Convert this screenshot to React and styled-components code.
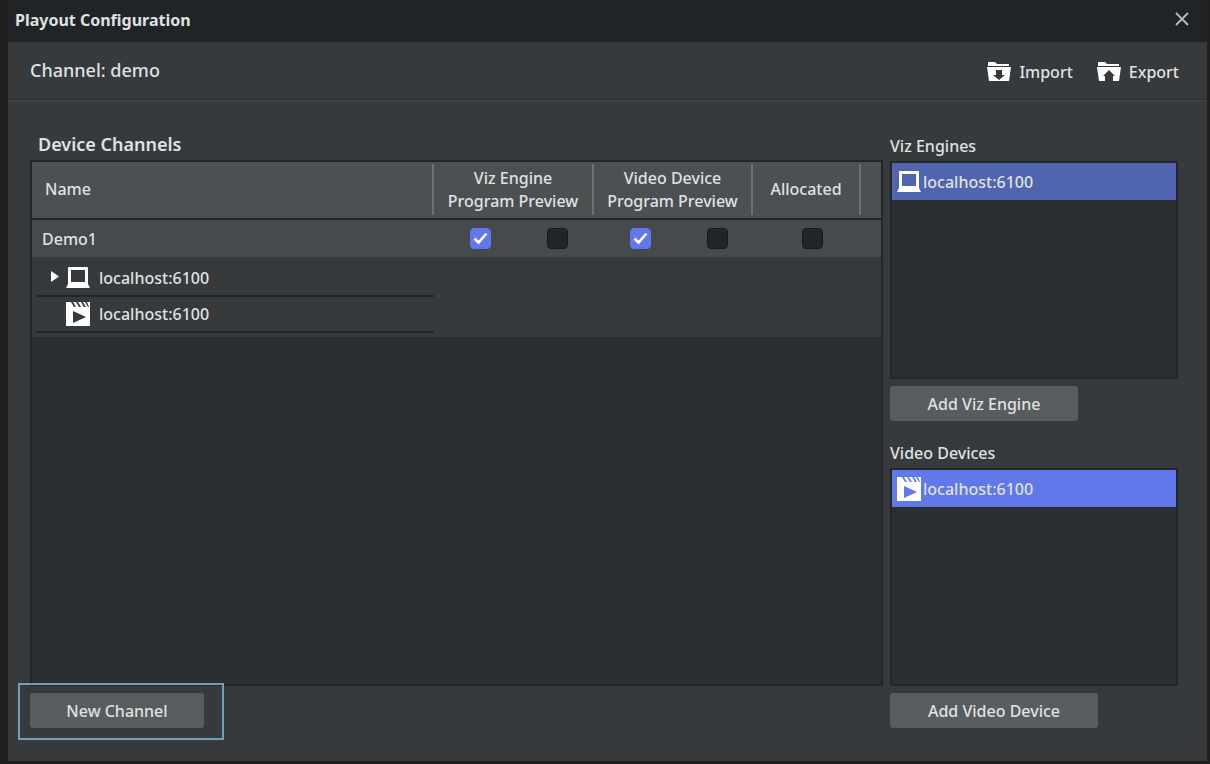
import React, { useState } from "react"
import styled, { createGlobalStyle } from "styled-components"

const colors = {
  page: "#1f1f20",
  titlebar: "#202427",
  window: "#373a3c",
  well: "#2b2f31",
  edge: "#232729",
  header: "#4c5052",
  row: "#464a4c",
  button: "#595c5e",
  text: "#dfe1e2",
  accent: "#6078ea",
  accentDim: "#5064b0",
  focus: "#6f9fbd"
}

const GlobalStyle = createGlobalStyle`
  * {
    box-sizing: border-box;
  }
  body {
    margin: 0;
    background: ${colors.page};
    color: ${colors.text};
    font: 500 16px/22px "Noto Sans", "Open Sans", sans-serif;
  }
  button {
    font: inherit;
    color: inherit;
    border: 0;
    cursor: pointer;
  }
`

const Page = styled.div`
  display: flex;
  min-height: 100vh;
  padding: 0 3px 3px 8px;
`

const Window = styled.main`
  flex: 1;
  display: flex;
  flex-direction: column;
  background: ${colors.window};
`

const TitleBar = styled.header`
  display: flex;
  align-items: center;
  justify-content: space-between;
  height: 42px;
  padding: 0 16px 2px 7px;
  background: ${colors.titlebar};
  h1 {
    margin: 0;
    font-size: 16px;
    font-weight: 700;
  }
`

const CloseButton = styled.button`
  display: flex;
  padding: 0;
  background: none;
`

const ChannelBar = styled.div`
  display: flex;
  align-items: center;
  justify-content: space-between;
  height: 60px;
  padding: 0 28px 0 22px;
  border-bottom: 2px solid #404345;
  box-shadow: inset 0 -1px #303335;
  h2 {
    margin: 0;
    padding-bottom: 2px;
    font-size: 18px;
    font-weight: 500;
  }
`

const Actions = styled.div`
  display: flex;
  gap: 24px;
  padding-top: 2px;
`

const ActionButton = styled.button`
  display: flex;
  align-items: center;
  gap: 8px;
  padding: 0;
  background: none;
`

const Body = styled.div`
  flex: 1;
  display: grid;
  grid-template-columns: minmax(0, 1fr) 288px;
  gap: 7px;
  padding: 29px 29px 33px 22px;
`

const Column = styled.div`
  display: flex;
  flex-direction: column;
  gap: 17px;
`

const Panel = styled.section`
  flex: 1;
  display: flex;
  flex-direction: column;
  align-items: flex-start;
  h3 {
    margin: 0;
    font-size: 16px;
    font-weight: 500;
    line-height: 30px;
  }
`

const ChannelsTitle = styled.h3`
  && {
    padding: 0 0 3px 8px;
    font-size: 18px;
    font-weight: 600;
    line-height: 26px;
  }
`

const Well = styled.div`
  flex: 1;
  width: 100%;
  margin-bottom: 7px;
  border: 2px solid ${colors.edge};
  background: ${colors.well};
`

const Button = styled.button`
  width: ${({ $width }) => $width}px;
  height: 35px;
  border-radius: 3px;
  background: ${colors.button};
`

const Highlight = styled.div`
  position: relative;
  &::after {
    content: "";
    position: absolute;
    inset: -10px -20px -12px -12px;
    border: 2px solid ${colors.focus};
    pointer-events: none;
  }
`

const Table = styled.table`
  width: 100%;
  table-layout: fixed;
  border-collapse: collapse;
  th,
  td {
    padding: 0;
    font-weight: 500;
    text-align: left;
  }
  thead {
    background: ${colors.header};
    border-bottom: 2px solid ${colors.edge};
  }
`

const Heading = styled.div`
  display: flex;
  align-items: center;
  justify-content: ${({ $start }) => ($start ? "flex-start" : "center")};
  height: 51px;
  margin: 2px 0 3px;
  padding-left: ${({ $start }) => ($start ? 13 : 0)}px;
  border-right: 2px solid #6e7173;
  line-height: 23px;
  text-align: center;
  white-space: nowrap;
`

const ChannelRow = styled.tr`
  height: 38px;
  background: ${colors.row};
  th {
    padding-left: 10px;
  }
`

const Checks = styled.div`
  display: flex;
  justify-content: center;
  gap: 56px;
  padding-left: 10px;
`

const DeviceRow = styled.tr`
  background: ${colors.window};
`

const Device = styled.div`
  display: flex;
  align-items: center;
  gap: 9px;
  height: 36px;
  margin-left: 4px;
  border-bottom: 2px solid ${colors.edge};
`

const Expander = styled.button`
  display: flex;
  width: 12px;
  height: 14px;
  margin: 0 -3px 0 12px;
  padding: 0;
  background: none;
  visibility: ${({ $hidden }) => ($hidden ? "hidden" : "visible")};
`

const Filler = styled.tr`
  height: 4px;
  background: ${colors.window};
`

const List = styled.ul`
  margin: 0;
  padding: 0;
  list-style: none;
`

const Item = styled.li`
  display: flex;
  align-items: center;
  gap: 2px;
  height: 37px;
  padding-left: 5px;
  background: ${({ $active }) => ($active ? colors.accent : colors.accentDim)};
`

const Box = styled.label`
  position: relative;
  display: flex;
  width: 21px;
  height: 21px;
  input {
    appearance: none;
    width: 100%;
    height: 100%;
    margin: 0;
    border: 1px solid #181b1d;
    border-radius: 4px;
    background: #212527;
  }
  input:checked {
    border-color: ${colors.accent};
    background: ${colors.accent};
  }
  svg {
    position: absolute;
    inset: 0;
    pointer-events: none;
  }
`

const Check = ({ label, initial = false }) => {
  const [checked, setChecked] = useState(initial)
  return (
    <Box>
      <input
        type="checkbox"
        aria-label={label}
        checked={checked}
        onChange={e => setChecked(e.target.checked)}
      />
      {checked && (
        <svg width="21" height="21" fill="none" stroke="#fff" strokeWidth="2.6">
          <path d="M4.500 10.500l4 4 8-9" />
        </svg>
      )}
    </Box>
  )
}

const EngineIcon = () => (
  <svg width="24" height="24" fill="#fff" aria-hidden="true">
    <path
      fillRule="evenodd"
      d="M3 1h18a1 1 0 0 1 1 1v16l2 4H0l2-4V2a1 1 0 0 1 1-1zm2 3v12h14V4z"
    />
  </svg>
)

const VideoIcon = () => (
  <svg width="24" height="24" fill="#fff" aria-hidden="true">
    <path
      fillRule="evenodd"
      d="M0 0h5l3 5h2L7 0h3l3 5h2l-3-5h3l3 5h2l-3-5h2l3 5h1l-2-5h3v24H0zM7 9v12l13-6z"
    />
  </svg>
)

const FolderIcon = ({ up }) => (
  <svg width="24" height="20" fill="#fff" aria-hidden="true">
    <path d="M1 0h7l2 2h12v2H1z" />
    <path
      fillRule="evenodd"
      d={
        up
          ? "M0 5h24l-2 14h-6v-5h2l-6-6-6 6h2v5H2z"
          : "M0 5h24l-2 14H2zM9 8v5H6l6 5 6-5h-3V8z"
      }
    />
  </svg>
)

const devices = [
  { name: "localhost:6100", icon: EngineIcon, expandable: true },
  { name: "localhost:6100", icon: VideoIcon }
]

const DevicePanel = ({ title, icon: Icon, active, action, width }) => (
  <Panel>
    <h3>{title}</h3>
    <Well>
      <List>
        <Item $active={active}>
          <Icon />
          localhost:6100
        </Item>
      </List>
    </Well>
    <Button $width={width}>{action}</Button>
  </Panel>
)

const ChannelTable = () => (
  <Table>
    <colgroup>
      <col />
      <col width="160" />
      <col width="159" />
      <col width="108" />
      <col width="20" />
    </colgroup>
    <thead>
      <tr>
        <th scope="col">
          <Heading $start>Name</Heading>
        </th>
        <th scope="col">
          <Heading>
            Viz Engine
            <br />
            Program Preview
          </Heading>
        </th>
        <th scope="col">
          <Heading>
            Video Device
            <br />
            Program Preview
          </Heading>
        </th>
        <th scope="col">
          <Heading>Allocated</Heading>
        </th>
        <td />
      </tr>
    </thead>
    <tbody>
      <ChannelRow>
        <th scope="row">Demo1</th>
        <td>
          <Checks>
            <Check label="Viz Engine program" initial />
            <Check label="Viz Engine preview" />
          </Checks>
        </td>
        <td>
          <Checks>
            <Check label="Video Device program" initial />
            <Check label="Video Device preview" />
          </Checks>
        </td>
        <td>
          <Checks>
            <Check label="Allocated" />
          </Checks>
        </td>
        <td />
      </ChannelRow>
      <Filler>
        <td colSpan="5" />
      </Filler>
      {devices.map(({ name, icon: Icon, expandable }, i) => (
        <DeviceRow key={i}>
          <td>
            <Device>
              <Expander $hidden={!expandable} aria-label="Expand">
                <svg width="12" height="14" fill="#fff">
                  <path d="M3 0l8 5.500-8 5.500z" />
                </svg>
              </Expander>
              <Icon />
              {name}
            </Device>
          </td>
          <td colSpan="4" />
        </DeviceRow>
      ))}
      <Filler>
        <td colSpan="5" />
      </Filler>
    </tbody>
  </Table>
)

const App = () => (
  <Page>
    <GlobalStyle />
    <Window>
      <TitleBar>
        <h1>Playout Configuration</h1>
        <CloseButton aria-label="Close">
          <svg width="18" height="18" stroke="#b9bbbc" strokeWidth="1.8">
            <path d="M3 2l12 12M15 2L3 14" />
          </svg>
        </CloseButton>
      </TitleBar>
      <ChannelBar>
        <h2>Channel: demo</h2>
        <Actions>
          <ActionButton>
            <FolderIcon />
            Import
          </ActionButton>
          <ActionButton>
            <FolderIcon up />
            Export
          </ActionButton>
        </Actions>
      </ChannelBar>
      <Body>
        <Panel>
          <ChannelsTitle>Device Channels</ChannelsTitle>
          <Well>
            <ChannelTable />
          </Well>
          <Highlight>
            <Button $width={174}>New Channel</Button>
          </Highlight>
        </Panel>
        <Column>
          <DevicePanel
            title="Viz Engines"
            icon={EngineIcon}
            action="Add Viz Engine"
            width={188}
          />
          <DevicePanel
            title="Video Devices"
            icon={VideoIcon}
            action="Add Video Device"
            width={208}
            active
          />
        </Column>
      </Body>
    </Window>
  </Page>
)

export default App
